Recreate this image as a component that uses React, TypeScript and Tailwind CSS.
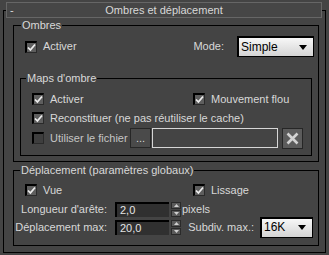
import React from 'react';

function Check({ checked = false }: { checked?: boolean }) {
  return (
    <span
      className={`w-[12px] h-[12px] shrink-0 flex items-center justify-center border-t-2 border-l-2 border-r border-b border-t-black border-l-black border-r-[#2a2a2a] border-b-[#2a2a2a] ${
        checked ? 'bg-[#5e5e5e]' : 'bg-[#3e3e3e]'
      }`}
    >
      {checked && (
        <svg width="9" height="9" viewBox="0 0 9 9">
          <path d="M1 4.5 L3.4 7 L8 1.5" stroke="#ececec" strokeWidth="1.8" fill="none" />
        </svg>
      )}
    </span>
  );
}

function Dropdown({ value, className = '' }: { value: string; className?: string }) {
  return (
    <div
      className={`h-[21px] flex items-center pl-[2px] pr-[6px] border-t-2 border-l-2 border-r border-b border-black bg-linear-to-b from-[#f7f7f7] to-[#d4d4d4] text-black text-[12px] ${className}`}
    >
      <span className="flex-1">{value}</span>
      <svg width="8" height="5" viewBox="0 0 8 5">
        <path d="M0 0 H8 L4 5 Z" fill="#000" />
      </svg>
    </div>
  );
}

function Spinner() {
  return (
    <div className="flex flex-col gap-[1px] ml-[2px]">
      <span className="w-[10px] h-[7px] bg-[#5a5a5a] border border-[#2a2a2a] flex items-center justify-center">
        <svg width="5" height="3" viewBox="0 0 5 3">
          <path d="M0 3 H5 L2.5 0 Z" fill="#cfcfcf" />
        </svg>
      </span>
      <span className="w-[10px] h-[7px] bg-[#5a5a5a] border border-[#2a2a2a] flex items-center justify-center">
        <svg width="5" height="3" viewBox="0 0 5 3">
          <path d="M0 0 H5 L2.5 3 Z" fill="#cfcfcf" />
        </svg>
      </span>
    </div>
  );
}

function NumField({ value }: { value: string }) {
  return (
    <div className="flex items-center">
      <div className="w-[54px] h-[15px] flex items-center pl-[3px] border-t-2 border-l-2 border-black bg-[#303030] text-[#e4e4e4]">
        {value}
      </div>
      <Spinner />
    </div>
  );
}

export default function App() {
  return (
    <div className="w-[329px] h-[255px] overflow-hidden bg-[#444444] pt-[2px] pl-[3px] text-[11px] leading-[13px] text-[#d8d8d8] font-['Liberation_Sans',sans-serif]">
      <fieldset className="w-[323px] h-[251px] border border-black p-0 m-0">
        <legend className="ml-[2px] p-0">
          <div className="w-[316px] h-[16px] border border-[#666666] bg-[#464646] flex items-center pl-[3px] pr-[3px]">
            <span className="w-[20px]">-</span>
            <span className="flex-1 text-center pr-[20px]">Ombres et déplacement</span>
          </div>
        </legend>

        <div className="pl-[9px] pr-[6px] pt-[1px]">
          {/* Ombres */}
          <fieldset className="h-[143px] border border-black p-0 m-0">
            <legend className="ml-[7px] px-[1px]">Ombres</legend>
            <div className="flex items-center h-[21px] mt-[4px] pl-[11px] pr-[4px]">
              <Check checked />
              <span className="ml-[6px]">Activer</span>
              <span className="ml-auto">Mode:</span>
              <Dropdown value="Simple" className="w-[77px] ml-[13px]" />
            </div>

            <div className="px-[6px] mt-[15px]">
              <fieldset className="h-[84px] border border-black p-0 m-0">
                <legend className="ml-[5px] px-[1px]">Maps d'ombre</legend>
                <div className="flex items-center h-[14px] mt-[7px] pl-[11px]">
                  <div className="w-[161px] flex items-center">
                    <Check checked />
                    <span className="ml-[6px]">Activer</span>
                  </div>
                  <Check checked />
                  <span className="ml-[6px]">Mouvement flou</span>
                </div>
                <div className="flex items-center h-[14px] mt-[5px] pl-[11px]">
                  <Check checked />
                  <span className="ml-[6px]">Reconstituer (ne pas réutiliser le cache)</span>
                </div>
                <div className="flex items-center h-[20px] mt-[3px] pl-[11px]">
                  <Check />
                  <span className="ml-[6px] text-[#c4c4c4]">Utiliser le fichier</span>
                  <button className="ml-auto w-[21px] h-[20px] border border-[#262626] bg-[#4a4a4a] text-[#d8d8d8] leading-[10px] flex items-end justify-center pb-[4px]">
                    ...
                  </button>
                  <div className="w-[126px] h-[20px] ml-[1px] border border-[#d6d6d6] bg-[#444444]" />
                  <button className="w-[21px] h-[21px] ml-[4px] mr-[8px] border border-[#262626] bg-[#5c5c5c] flex items-center justify-center">
                    <svg width="13" height="13" viewBox="0 0 13 13">
                      <path d="M1.5 1.5 L11.5 11.5 M11.5 1.5 L1.5 11.5" stroke="#d2d2d2" strokeWidth="2.6" />
                    </svg>
                  </button>
                </div>
              </fieldset>
            </div>
          </fieldset>

          {/* Déplacement */}
          <fieldset className="h-[82px] mt-[2px] border border-black p-0 m-0">
            <legend className="ml-[6px] px-[1px]">Déplacement (paramètres globaux)</legend>
            <div className="flex items-center h-[14px] mt-[6px] pl-[11px]">
              <div className="w-[168px] flex items-center">
                <Check checked />
                <span className="ml-[6px]">Vue</span>
              </div>
              <Check checked />
              <span className="ml-[6px]">Lissage</span>
            </div>
            <div className="flex items-center h-[15px] mt-[5px]">
              <span className="w-[93px] text-right">Longueur d'arête:</span>
              <span className="ml-[8px]">
                <NumField value="2,0" />
              </span>
              <span className="ml-[1px]">pixels</span>
            </div>
            <div className="flex items-center h-[20px] pr-[5px]">
              <span className="w-[93px] text-right">Déplacement max:</span>
              <span className="ml-[8px]">
                <NumField value="20,0" />
              </span>
              <span className="ml-auto">Subdiv. max.:</span>
              <Dropdown value="16K" className="w-[53px] ml-[6px]" />
            </div>
          </fieldset>
        </div>
      </fieldset>
    </div>
  );
}
